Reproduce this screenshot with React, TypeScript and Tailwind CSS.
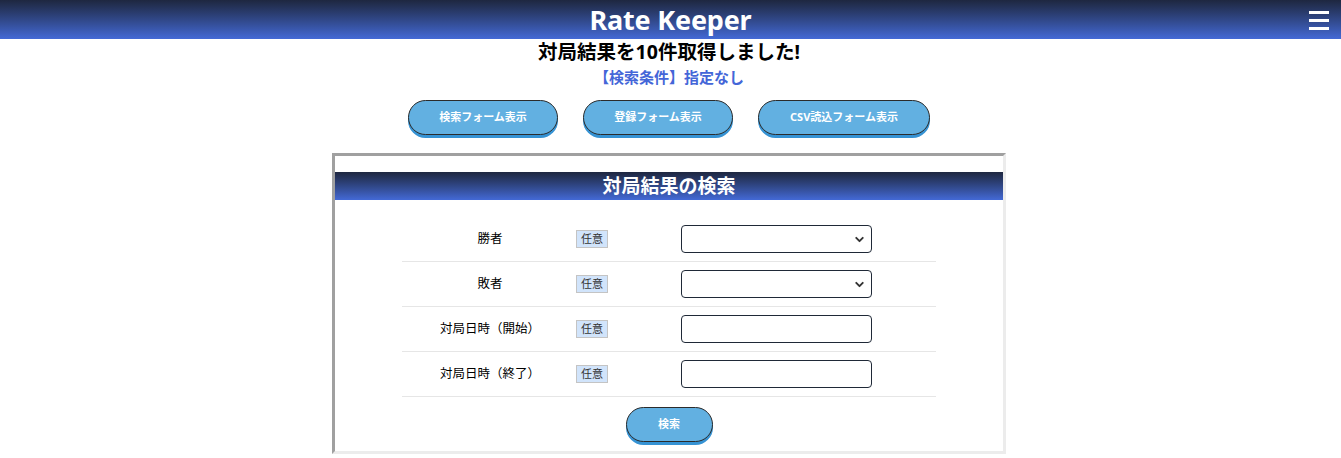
import { ChevronDown } from "lucide-react";

const font = { fontFamily: '"Noto Sans", "Noto Sans CJK JP", sans-serif' };

const rows = [
  { label: "勝者", type: "select" },
  { label: "敗者", type: "select" },
  { label: "対局日時（開始）", type: "input" },
  { label: "対局日時（終了）", type: "input" },
];

const PillButton = ({ label, width }: { label: string; width: string }) => (
  <button
    className={`${width} h-[35px] rounded-full bg-[#62b0e1] border border-[#2b2b2b] shadow-[0_3px_0_#3592d3] text-white text-[11px] font-bold`}
  >
    {label}
  </button>
);

export default function App() {
  return (
    <div className="min-h-screen bg-white text-black" style={font}>
      <header className="relative h-[39px] bg-gradient-to-b from-[#1e2740] to-[#4369d6] flex items-center justify-center">
        <h1 className="text-white text-[27px] font-bold leading-none tracking-[-0.2px]">Rate Keeper</h1>
        <button className="absolute right-[12px] top-[11px] flex flex-col gap-[5px]">
          <span className="block w-[20px] h-[3px] bg-white" />
          <span className="block w-[20px] h-[3px] bg-white" />
          <span className="block w-[20px] h-[3px] bg-white" />
        </button>
      </header>

      <div className="flex flex-col items-center pr-[3px]">
        <p className="text-[19.5px] font-bold leading-[26px]">対局結果を10件取得しました!</p>
        <p className="text-[15px] font-bold leading-[24px] text-[#4466d8]">【検索条件】指定なし</p>

        <div className="mt-[11px] flex gap-[25px]">
          <PillButton label="検索フォーム表示" width="w-[150px]" />
          <PillButton label="登録フォーム表示" width="w-[150px]" />
          <PillButton label="CSV読込フォーム表示" width="w-[172px]" />
        </div>

        <section className="mt-[18px] w-[674px] border-[3px] border-t-[#a0a0a0] border-l-[#a0a0a0] border-r-[#ececec] border-b-[#ececec] pt-[16px] pb-[9px]">
          <h2 className="h-[28px] bg-gradient-to-b from-[#1e2740] to-[#4369d6] text-white text-[19px] font-bold flex items-center justify-center">
            対局結果の検索
          </h2>

          <div className="mx-auto mt-[17px] w-[534px]">
            {rows.map((row) => (
              <div key={row.label} className="h-[45px] flex items-center border-b border-[#e6e6e6]">
                <div className="w-[176px] text-center text-[12.5px]">{row.label}</div>
                <div className="w-[103px] flex items-center">
                  <span className="ml-[-2px] flex items-center px-[4px] h-[18px] bg-[#d1e4fb] border border-[#c4c4c4] text-[11px] text-[#333]">
                    任意
                  </span>
                </div>
                {row.type === "select" ? (
                  <div className="relative w-[191px] h-[28px] border border-[#1f2937] rounded-[4px] bg-white">
                    <ChevronDown className="absolute right-[5px] top-[7px] text-[#333]" size={13} strokeWidth={3.5} />
                  </div>
                ) : (
                  <input className="w-[191px] h-[28px] border border-[#1f2937] rounded-[4px] bg-white" />
                )}
              </div>
            ))}

            <div className="mt-[10px] flex justify-center">
              <PillButton label="検索" width="w-[87px]" />
            </div>
          </div>
        </section>
      </div>
    </div>
  );
}
